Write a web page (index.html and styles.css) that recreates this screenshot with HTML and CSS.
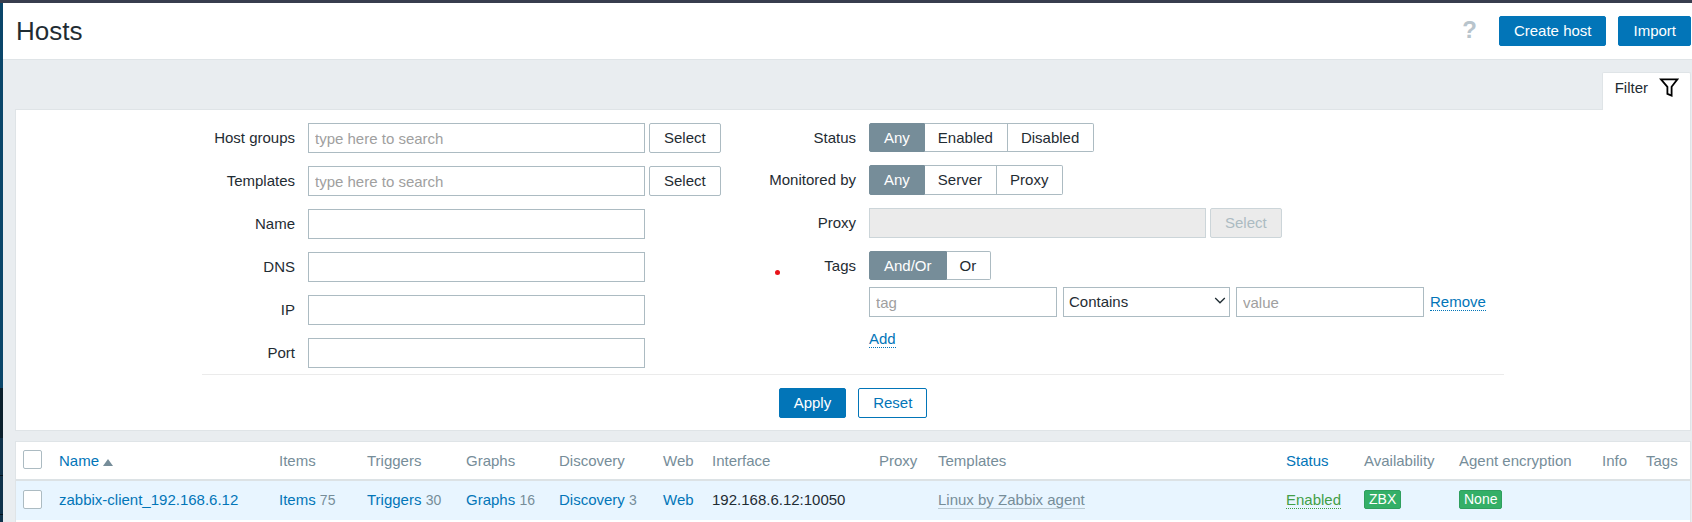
FILE: index.html
```html
<!DOCTYPE html>
<html lang="en">
<head>
<meta charset="utf-8">
<title>Hosts</title>
<link rel="stylesheet" href="styles.css">
</head>
<body>
<div class="rail"></div>
<div class="page">
  <header class="header">
    <h1 class="title">Hosts</h1>
    <a class="help" href="#" title="Help">?</a>
    <button class="btn btn-primary" type="button">Create host</button>
    <button class="btn btn-primary" type="button">Import</button>
  </header>
  <main class="main">
    <div class="tabs">
      <a class="tab" href="#filter">Filter
        <svg class="funnel" width="20" height="20" viewBox="0 0 20 20" fill="none" stroke="#000" stroke-width="1.8" aria-hidden="true"><path d="M2 1.4H18.4L12.6 8.8V17.6L8.4 15.8V8.8Z"/></svg>
      </a>
    </div>
    <form class="panel" id="filter">
      <div class="columns">
        <div class="column">
          <div class="row"><label class="label" for="groups">Host groups</label><input class="text" id="groups" type="text" placeholder="type here to search"><button class="btn btn-grey" type="button">Select</button></div>
          <div class="row"><label class="label" for="templates">Templates</label><input class="text" id="templates" type="text" placeholder="type here to search"><button class="btn btn-grey" type="button">Select</button></div>
          <div class="row"><label class="label" for="name">Name</label><input class="text" id="name" type="text"></div>
          <div class="row"><label class="label" for="dns">DNS</label><input class="text" id="dns" type="text"></div>
          <div class="row"><label class="label" for="ip">IP</label><input class="text" id="ip" type="text"></div>
          <div class="row"><label class="label" for="port">Port</label><input class="text" id="port" type="text"></div>
        </div>
        <div class="column column-wide">
          <div class="row">
            <span class="label" id="l-status">Status</span>
            <div class="segments" role="radiogroup" aria-labelledby="l-status">
              <input type="radio" name="status" id="s1" checked><label for="s1">Any</label><input type="radio" name="status" id="s2"><label for="s2">Enabled</label><input type="radio" name="status" id="s3"><label for="s3">Disabled</label>
            </div>
          </div>
          <div class="row">
            <span class="label" id="l-mon">Monitored by</span>
            <div class="segments segments-tall" role="radiogroup" aria-labelledby="l-mon">
              <input type="radio" name="mon" id="m1" checked><label for="m1">Any</label><input type="radio" name="mon" id="m2"><label for="m2">Server</label><input type="radio" name="mon" id="m3"><label for="m3">Proxy</label>
            </div>
          </div>
          <div class="row"><label class="label" for="proxy">Proxy</label><input class="text" id="proxy" type="text" disabled><button class="btn btn-grey" type="button" disabled>Select</button></div>
          <div class="row">
            <span class="label" id="l-tags">Tags</span>
            <div class="segments" role="radiogroup" aria-labelledby="l-tags">
              <input type="radio" name="tags" id="t1" checked><label for="t1">And/Or</label><input type="radio" name="tags" id="t2"><label for="t2">Or</label>
            </div>
          </div>
          <div class="tag-row">
            <input class="text tag-text" type="text" placeholder="tag" aria-label="Tag">
            <div class="select-wrap">
              <select class="select" aria-label="Operator"><option>Contains</option><option>Equals</option></select>
              <svg class="chevron" width="12" height="8" viewBox="0 0 12 8" fill="none" stroke="#1f2c33" stroke-width="1.3" aria-hidden="true"><path d="M1.2 1L6 5.8L10.8 1"/></svg>
            </div>
            <input class="text tag-text" type="text" placeholder="value" aria-label="Value">
            <button class="link" type="button">Remove</button>
          </div>
          <div class="add-row"><button class="link" type="button">Add</button></div>
        </div>
        <span class="dot"></span>
      </div>
      <div class="actions">
        <button class="btn btn-primary" type="button">Apply</button>
        <button class="btn btn-outline" type="reset">Reset</button>
      </div>
    </form>
    <div class="list">
      <table class="hosts">
        <colgroup><col class="c-check"><col class="c-name"><col class="c-items"><col class="c-triggers"><col class="c-graphs"><col class="c-discovery"><col class="c-web"><col class="c-interface"><col class="c-proxy"><col><col class="c-status"><col class="c-avail"><col class="c-enc"><col class="c-info"><col class="c-tags"></colgroup>
        <thead>
          <tr>
            <th><input class="check" type="checkbox" aria-label="Select all"></th>
            <th><a href="#">Name<span class="sort"></span></a></th>
            <th>Items</th><th>Triggers</th><th>Graphs</th><th>Discovery</th><th>Web</th><th>Interface</th><th>Proxy</th><th>Templates</th>
            <th><a href="#">Status</a></th><th>Availability</th><th>Agent encryption</th><th>Info</th><th>Tags</th>
          </tr>
        </thead>
        <tbody>
          <tr>
            <td><input class="check" type="checkbox" aria-label="Select zabbix-client_192.168.6.12"></td>
            <td><a href="#">zabbix-client_192.168.6.12</a></td>
            <td><a href="#">Items</a> <span class="count">75</span></td>
            <td><a href="#">Triggers</a> <span class="count">30</span></td>
            <td><a href="#">Graphs</a> <span class="count">16</span></td>
            <td><a href="#">Discovery</a> <span class="count">3</span></td>
            <td><a href="#">Web</a></td>
            <td>192.168.6.12:10050</td>
            <td></td>
            <td><a class="template" href="#">Linux by Zabbix agent</a></td>
            <td><a class="enabled" href="#">Enabled</a></td>
            <td><span class="badge">ZBX</span></td>
            <td><span class="badge">None</span></td>
            <td></td><td></td>
          </tr>
        </tbody>
      </table>
    </div>
  </main>
</div>
</body>
</html>
```
FILE: styles.css
```css
* { box-sizing: border-box; }

body {
  display: flex;
  min-height: 100vh;
  margin: 0;
  border-top: 3px solid #383d4e;
  background: #e9edf0;
  color: #1f2c33;
  font: 15px/18px "Liberation Sans", Arial, sans-serif;
}

button, input, select { margin: 0; font: inherit; color: inherit; }
a { color: #0275b8; text-decoration: none; }

.rail {
  flex: none;
  width: 3px;
  background: linear-gradient(#0a466a 385px, #0a1f2c 385px 435px, #10324a 435px 472px, #04121c 472px 473px, #10324a 473px 511px, #04121c 511px 512px, #10324a 512px);
}

.page { display: flex; flex: 1; flex-direction: column; min-width: 0; }

.header {
  display: flex;
  align-items: center;
  gap: 12px;
  padding: 13px 1px 13px 13px;
  border-bottom: 1px solid #dfe4e7;
  background: #fff;
}
.title { flex: 1; margin: 0; font-size: 26px; font-weight: 400; line-height: 30px; }
.help { margin: 0 10px 2px 0; color: #b8c4cc; font-size: 24px; font-weight: 700; line-height: 26px; }

.btn {
  flex: none;
  height: 30px;
  padding: 0 14px;
  border: 1px solid #0275b8;
  border-radius: 2px;
  white-space: nowrap;
}
.btn-primary { background: #0275b8; color: #fff; }
.btn-outline { background: #fff; color: #0275b8; }
.btn-grey { border-color: #acbbc2; background: #fff; }
.btn-grey:disabled { border-color: #ccd5d9; background: #ebebeb; color: #acbbc2; }

.main { display: flex; flex: 1; flex-direction: column; padding: 12px 1px 0 12px; }

.tabs { display: flex; justify-content: flex-end; }
.tab {
  position: relative;
  display: flex;
  align-items: center;
  gap: 11px;
  height: 38px;
  margin-bottom: -1px;
  padding: 0 11px 7px 12px;
  border: 1px solid #dfe4e7;
  border-bottom: 0;
  border-radius: 2px 2px 0 0;
  background: #fff;
  color: #1f2c33;
}

.panel { padding: 13px 12px 12px; border: 1px solid #dfe4e7; background: #fff; }
.columns {
  position: relative;
  display: flex;
  max-width: 1302px;
  margin: 0 auto;
  padding-bottom: 6px;
  border-bottom: 1px solid #ebebeb;
}
.column { display: flex; flex: none; flex-direction: column; gap: 13px; width: 519px; }
.column-wide { flex: 1; }
.row { display: flex; align-items: center; gap: 4px; }
.label { flex: none; width: 93px; margin-right: 9px; text-align: right; }
.column-wide .label { width: 135px; }

.text {
  width: 337px;
  height: 30px;
  padding: 0 6px;
  border: 1px solid #acbbc2;
  border-radius: 0;
  background: #fff;
}
.text::placeholder { color: #a0a0a0; opacity: 1; }
.text:disabled { border-color: #ccd5d9; background: #ebebeb; }

.segments { display: flex; height: 29px; }
.segments-tall { height: 30px; }
.segments input { position: absolute; opacity: 0; pointer-events: none; }
.segments label {
  display: flex;
  align-items: center;
  padding: 0 14px 0 13px;
  border: 1px solid #acbbc2;
  border-left: 0;
}
.segments label:first-of-type { padding-left: 14px; border-left: 1px solid #acbbc2; border-radius: 2px 0 0 2px; }
.segments label:last-of-type { border-radius: 0 2px 2px 0; }
.segments input:checked + label { border-color: #768d99; background: #768d99; color: #fff; }

.tag-row { display: flex; align-items: center; gap: 6px; margin-top: -6px; padding-left: 148px; }
.tag-text { width: 188px; }
.select-wrap { position: relative; width: 167px; }
.select {
  display: block;
  width: 100%;
  height: 30px;
  padding: 0 5px;
  border: 1px solid #acbbc2;
  border-radius: 0;
  appearance: none;
  background: #fff;
}
.chevron { position: absolute; top: 10px; right: 4px; pointer-events: none; }
.add-row { display: flex; padding-left: 148px; }
.link {
  padding: 0;
  border: 0;
  border-bottom: 1px dotted #0275b8;
  background: none;
  color: #0275b8;
  line-height: 17px;
}
.dot {
  position: absolute;
  top: 147px;
  left: 573px;
  width: 5px;
  height: 5px;
  border-radius: 50%;
  background: #e81319;
}

.actions { display: flex; justify-content: center; gap: 12px; padding-top: 13px; }

.list { flex: 1; margin-top: 10px; border: 1px solid #dfe4e7; border-bottom: 0; background: #fff; }
.hosts { width: 100%; border-collapse: separate; border-spacing: 0; table-layout: fixed; }
.hosts th, .hosts td { padding: 0 6px; text-align: left; vertical-align: middle; white-space: nowrap; }
.hosts th { height: 39px; border-bottom: 2px solid #dce2e5; color: #768d99; font-weight: 400; }
.hosts td { height: 39px; padding-bottom: 2px; background: #e8f5ff; }
.hosts th:first-child, .hosts td:first-child { padding-left: 7px; }

.c-check { width: 37px; }
.c-name { width: 220px; }
.c-items { width: 88px; }
.c-triggers { width: 99px; }
.c-graphs { width: 93px; }
.c-discovery { width: 104px; }
.c-web { width: 49px; }
.c-interface { width: 167px; }
.c-proxy { width: 59px; }
.c-status { width: 78px; }
.c-avail { width: 95px; }
.c-enc { width: 143px; }
.c-info { width: 44px; }
.c-tags { width: 50px; }

.check {
  display: block;
  width: 19px;
  height: 19px;
  border: 1px solid #acbbc2;
  border-radius: 2px;
  appearance: none;
  background: #fff;
}
th .check { margin-bottom: 2px; }
.sort {
  display: inline-block;
  margin-left: 4px;
  border: 5px solid transparent;
  border-top: 0;
  border-bottom: 7px solid #768d99;
}
.count { color: #768d99; font-size: 14px; }
.template { border-bottom: 1px solid #b9c9d2; color: #768d99; }
.enabled { border-bottom: 1px dotted #429e47; color: #429e47; }
.badge {
  display: inline-block;
  padding: 0 4px;
  border: 1px solid #2f9f5e;
  border-radius: 2px;
  background: #34af67;
  color: #fff;
  font-size: 14px;
  line-height: 17px;
}
```
